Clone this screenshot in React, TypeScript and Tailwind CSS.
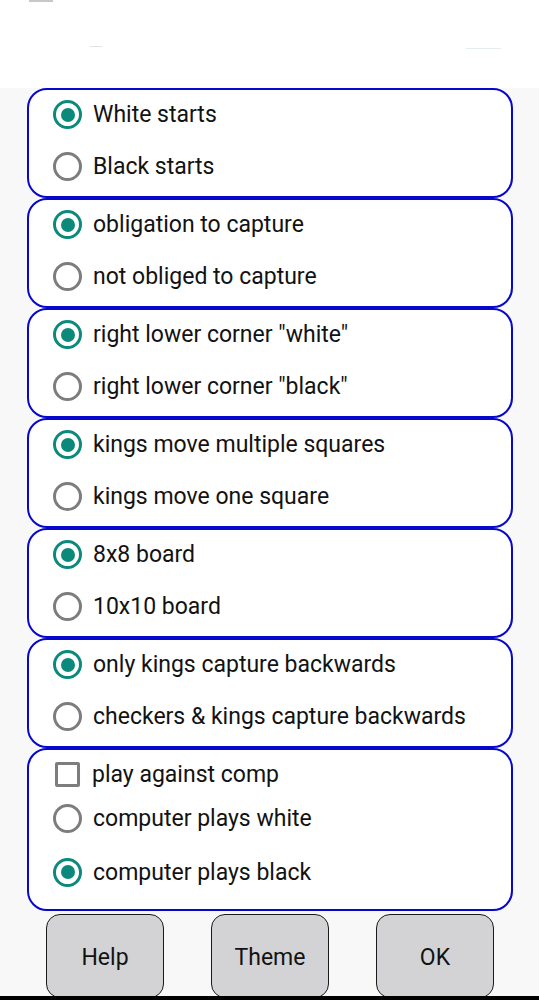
import React from "react";

function Radio({ checked }: { checked: boolean }) {
  return checked ? (
    <div className="w-[29px] h-[29px] rounded-full border-[3.5px] border-[#0b8a7b] flex items-center justify-center shrink-0">
      <div className="w-[14px] h-[14px] rounded-full bg-[#0b8a7b]" />
    </div>
  ) : (
    <div className="w-[29px] h-[29px] rounded-full border-[3px] border-[#7d7d7d] shrink-0" />
  );
}

function Row({ checked, label, h }: { checked: boolean; label: string; h: string }) {
  return (
    <div className={`flex items-center gap-[11px] pl-[24px] ${h}`}>
      <Radio checked={checked} />
      <span className="text-[23px] text-[#121212] leading-none">{label}</span>
    </div>
  );
}

const groups: [string, string][] = [
  ["White starts", "Black starts"],
  ["obligation to capture", "not obliged to capture"],
  ['right lower corner "white"', 'right lower corner "black"'],
  ["kings move multiple squares", "kings move one square"],
  ["8x8 board", "10x10 board"],
  ["only kings capture backwards", "checkers & kings capture backwards"],
];

export default function App() {
  return (
    <div
      className="w-[539px] h-[1000px] overflow-hidden flex flex-col bg-[#f8f8f8]"
      style={{ fontFamily: "Roboto, 'Noto Sans', Arial, sans-serif" }}
    >
      <div className="h-[88px] bg-white shrink-0 relative">
        <div className="absolute left-[29px] top-0 w-[24px] h-[2px] bg-[#c8c8c8]" />
        <div className="absolute left-[90px] top-[46px] w-[12px] h-[1px] bg-[#e4e4e4]" />
        <div className="absolute left-[466px] top-[48px] w-[35px] h-[1px] bg-[#e4ecec]" />
      </div>
      <div className="flex flex-col pl-[27px] pr-[26px]">
        {groups.map((g, i) => (
          <div
            key={i}
            className="h-[110px] rounded-[20px] border-2 border-[#0808cc] bg-white flex flex-col"
          >
            <Row checked label={g[0]} h="h-[49px]" />
            <Row checked={false} label={g[1]} h="h-[54px]" />
          </div>
        ))}
        <div className="h-[163px] rounded-[20px] border-2 border-[#0808cc] bg-white flex flex-col">
          <div className="flex items-center gap-[12px] pl-[26px] h-[49px]">
            <div className="w-[25px] h-[25px] rounded-[2px] border-[3px] border-[#7d7d7d] shrink-0" />
            <span className="text-[23px] text-[#121212] leading-none">play against comp</span>
          </div>
          <Row checked={false} label="computer plays white" h="h-[39px]" />
          <Row checked label="computer plays black" h="h-[68px]" />
        </div>
      </div>
      <div className="h-[82px] mt-[3px] overflow-hidden flex gap-[47px] pl-[46px] shrink-0">
        {["Help", "Theme", "OK"].map((b) => (
          <div
            key={b}
            className="w-[118px] h-[84px] shrink-0 rounded-[14px] border border-[#1a1a1a] bg-[#d3d3d5] flex items-center justify-center pt-[4px] text-[23px] text-[#121212]"
          >
            {b}
          </div>
        ))}
      </div>
      <div className="h-[5px] bg-black shrink-0" />
    </div>
  );
}
